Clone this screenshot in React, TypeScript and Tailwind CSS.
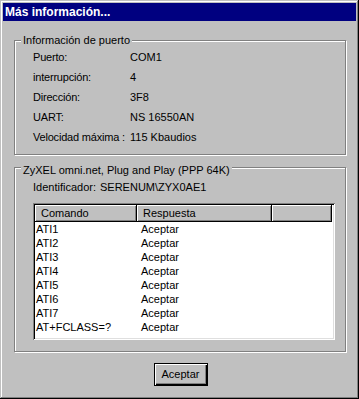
const rows: [string, string][] = [
  ['ATI1', 'Aceptar'],
  ['ATI2', 'Aceptar'],
  ['ATI3', 'Aceptar'],
  ['ATI4', 'Aceptar'],
  ['ATI5', 'Aceptar'],
  ['ATI6', 'Aceptar'],
  ['ATI7', 'Aceptar'],
  ['AT+FCLASS=?', 'Aceptar'],
];

const info: [string, string][] = [
  ['Puerto:', 'COM1'],
  ['interrupción:', '4'],
  ['Dirección:', '3F8'],
  ['UART:', 'NS 16550AN'],
  ['Velocidad máxima :', '115 Kbaudios'],
];

const HeaderCell = ({ label, w }: { label: string; w: string }) => (
  <div
    className={`${w} h-[17px] flex items-center pl-[6px] bg-[#c0c0c0] shadow-[inset_-1px_-1px_0_#000,inset_1px_1px_0_#fff,inset_-2px_-2px_0_#808080]`}>
    {label}
  </div>
);

export default function App() {
  return (
    <div
      className="w-[359px] h-[399px] bg-[#c0c0c0] p-[3px] flex flex-col text-[11px] text-black shadow-[inset_-1px_-1px_0_#000,inset_1px_1px_0_#c0c0c0,inset_-2px_-2px_0_#808080,inset_2px_2px_0_#fff]"
      style={{ fontFamily: '"Liberation Sans", Arial, sans-serif' }}>
      <div className="h-[18px] w-[353px] bg-[#000080] text-white font-bold text-[12px] flex items-center pl-[2px]">
        Más información...
      </div>

      {/* Información de puerto */}
      <div className="relative ml-[11px] mt-[19px] w-[332px] h-[115px] border border-[#808080] shadow-[inset_1px_1px_0_#fff,1px_1px_0_#fff]">
        <span className="absolute left-[6px] top-[-8px] bg-[#c0c0c0] px-[2px] leading-[15px]">
          Información de puerto
        </span>
        <div className="pt-[6px] pl-[18px] flex flex-col">
          {info.map(([k, v]) => (
            <div key={k} className="flex h-[20px] items-center">
              <span className="w-[97px] whitespace-nowrap tracking-[-0.2px]">{k}</span>
              <span>{v}</span>
            </div>
          ))}
        </div>
      </div>

      {/* ZyXEL */}
      <div className="relative ml-[11px] mt-[12px] w-[332px] h-[185px] border border-[#808080] shadow-[inset_1px_1px_0_#fff,1px_1px_0_#fff]">
        <span className="absolute left-[6px] top-[-5px] bg-[#c0c0c0] px-[2px] leading-[15px]">
          ZyXEL omni.net, Plug and Play (PPP 64K)
        </span>
        <div className="pt-[12px] pl-[18px] flex h-[15px] items-center box-content">
          <span className="w-[67px]">Identificador:</span>
          <span>SERENUM\ZYX0AE1</span>
        </div>
        <div className="ml-[18px] mt-[8px] w-[302px] h-[137px] bg-white p-[2px] shadow-[inset_1px_1px_0_#808080,inset_-1px_-1px_0_#fff,inset_2px_2px_0_#000,inset_-2px_-2px_0_#dfdfdf]">
          <div className="flex">
            <HeaderCell label="Comando" w="w-[102px]" />
            <HeaderCell label="Respuesta" w="w-[135px]" />
            <HeaderCell label="" w="w-[60px]" />
          </div>
          {rows.map(([c, r]) => (
            <div key={c} className="flex h-[14px] items-center">
              <span className="w-[106px] pl-[1px]">{c}</span>
              <span>{r}</span>
            </div>
          ))}
        </div>
      </div>

      <div className="flex justify-center mt-[11px]">
        <button className="ml-[2px] w-[54px] h-[23px] bg-[#c0c0c0] border border-black shadow-[inset_1px_1px_0_#fff,inset_-1px_-1px_0_#000,inset_-2px_-2px_0_#808080] text-[11px]">
          Aceptar
        </button>
      </div>
    </div>
  );
}
